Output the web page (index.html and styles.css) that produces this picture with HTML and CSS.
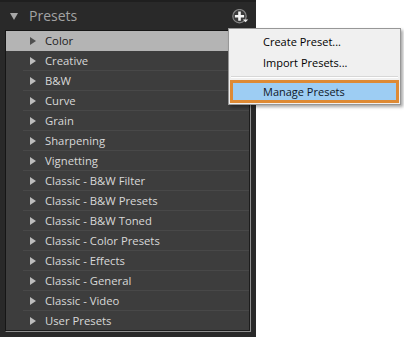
FILE: index.html
```html
<!DOCTYPE html>
<html>
<head>
<meta charset="utf-8">
<link rel="stylesheet" href="styles.css">
</head>
<body>
<div class="stage">
  <div class="panel">
    <div class="header">
      <div class="title"><span class="tri-down"></span><span class="title-text">Presets</span></div>
      <svg class="plus" width="18" height="16" viewBox="0 0 18 16">
        <circle cx="8.5" cy="7.2" r="6.7" fill="#3a3a3a" stroke="#858585" stroke-width="1.2"/>
        <path d="M8.5 2.6v9.2M3.9 7.2h9.2" stroke="#f4f4f4" stroke-width="2.6"/>
        <path d="M11.8 10.4h5.4l-2.7 2.8z" fill="#e8e8e8"/>
      </svg>
    </div>
    <div class="list">
      <div class="row selected"><span class="tri-right"></span><span class="label">Color</span></div>
      <div class="row"><span class="tri-right"></span><span class="label">Creative</span></div>
      <div class="row"><span class="tri-right"></span><span class="label">B&amp;W</span></div>
      <div class="row"><span class="tri-right"></span><span class="label">Curve</span></div>
      <div class="row"><span class="tri-right"></span><span class="label">Grain</span></div>
      <div class="row"><span class="tri-right"></span><span class="label">Sharpening</span></div>
      <div class="row"><span class="tri-right"></span><span class="label">Vignetting</span></div>
      <div class="row"><span class="tri-right"></span><span class="label">Classic - B&amp;W Filter</span></div>
      <div class="row"><span class="tri-right"></span><span class="label">Classic - B&amp;W Presets</span></div>
      <div class="row"><span class="tri-right"></span><span class="label">Classic - B&amp;W Toned</span></div>
      <div class="row"><span class="tri-right"></span><span class="label">Classic - Color Presets</span></div>
      <div class="row"><span class="tri-right"></span><span class="label">Classic - Effects</span></div>
      <div class="row"><span class="tri-right"></span><span class="label">Classic - General</span></div>
      <div class="row"><span class="tri-right"></span><span class="label">Classic - Video</span></div>
      <div class="row last"><span class="tri-right"></span><span class="label">User Presets</span></div>
    </div>
  </div>
  <div class="menu">
    <div class="item">Create Preset...</div>
    <div class="item">Import Presets...</div>
    <div class="sep"></div>
    <div class="item active">Manage Presets</div>
  </div>
</div>
</body>
</html>
```
FILE: styles.css
```css
html, body {
  margin: 0;
  padding: 0;
  background: #ffffff;
}
.stage {
  position: relative;
  width: 404px;
  height: 337px;
  overflow: hidden;
  font-family: "Open Sans", "Noto Sans", sans-serif;
}
.panel {
  width: 256px;
  height: 337px;
  background: #292929;
  box-sizing: border-box;
  border-top: 2px solid #1f1f1f;
}
.header {
  height: 28px;
  display: flex;
  align-items: center;
  justify-content: space-between;
  padding: 0 7px 0 10px;
}
.title {
  display: flex;
  align-items: center;
}
.tri-down {
  width: 0;
  height: 0;
  border-left: 4px solid transparent;
  border-right: 4px solid transparent;
  border-top: 7px solid #a8a8a8;
  margin-right: 11px;
  margin-top: 1px;
}
.title-text {
  color: #a3a3a3;
  font-size: 14px;
  line-height: 18px;
  margin-top: -1px;
}
.plus {
  display: block;
  margin-top: 1px;
}
.list {
  margin-left: 5px;
  width: 246px;
  box-sizing: border-box;
  background: #3d3d3d;
  border-top: 1px solid #161616;
  border-left: 1px solid #161616;
  border-right: 1px solid #8e8e8e;
  border-bottom: 1px solid #8e8e8e;
  box-shadow: inset -1px -1px 0 #1c1c1c;
}
.row {
  height: 20px;
  display: flex;
  align-items: center;
  position: relative;
  padding-left: 24px;
  box-sizing: border-box;
}
.row::after {
  content: "";
  position: absolute;
  left: 17px;
  right: 1px;
  bottom: 0;
  height: 1px;
  background: #484848;
}
.row.last::after {
  display: none;
}
.row.selected {
  background: #b4b4b4;
}
.row.selected::after {
  display: none;
}
.tri-right {
  width: 0;
  height: 0;
  border-top: 4px solid transparent;
  border-bottom: 4px solid transparent;
  border-left: 6px solid #bdbdbd;
  margin-right: 9px;
}
.row.selected .tri-right {
  border-left-color: #505050;
}
.label {
  color: #d8d8d8;
  font-size: 11.3px;
  line-height: 16px;
}
.row.selected .label {
  color: #1c1c1c;
}
.menu {
  position: absolute;
  left: 228px;
  top: 28px;
  width: 173px;
  height: 77px;
  box-sizing: border-box;
  background: #f0f0f0;
  border: 1px solid #979797;
  box-shadow: 2px 2px 3px rgba(0, 0, 0, 0.35);
  padding: 2px 1px;
}
.item {
  height: 21px;
  display: flex;
  align-items: center;
  padding-left: 33px;
  font-size: 11px;
  color: #000;
  box-sizing: border-box;
}
.sep {
  height: 7px;
  position: relative;
}
.sep::after {
  content: "";
  position: absolute;
  left: 1px;
  right: 1px;
  top: 3px;
  height: 1px;
  background: #d7d7d7;
  border-bottom: 1px solid #ffffff;
}
.item.active {
  height: 23px;
  background: #9dcdf3;
  border: 3px solid #de8a34;
  padding-left: 30px;
  color: #101828;
}
```
